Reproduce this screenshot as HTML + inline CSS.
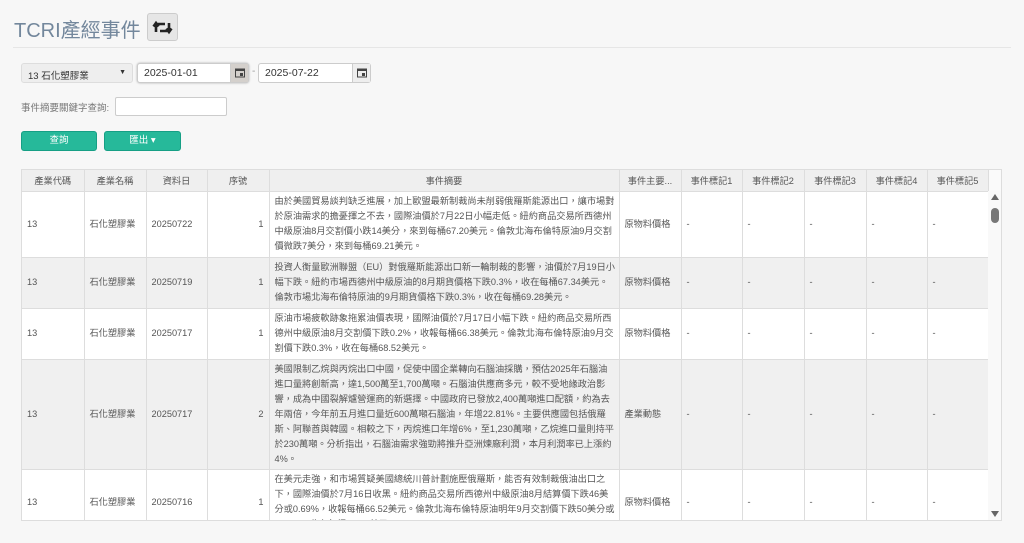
<!DOCTYPE html>
<html><head><meta charset="utf-8"><style>
*{box-sizing:border-box;margin:0;padding:0}
body{width:1024px;height:543px;background:#f7f7f7;font-family:"Liberation Sans","Noto Sans CJK TC",sans-serif;color:#555;position:relative;overflow:hidden}
.abs{position:absolute}
.title{left:14px;top:14px;font-size:20px;color:#73879c}
.ib{left:147px;top:13px;width:31px;height:28px;border:1px solid #ccc;border-radius:3px;background:#e6e6e6}
.hr{left:13px;top:47px;width:998px;height:1px;background:#e6e6e6}
.sel{left:21px;top:63px;width:112px;height:20px;border:1px solid #ddd;border-radius:3px;background:#eee;font-size:9.5px;padding:4px 6px;color:#333}
.date{height:20px;border:1px solid #ccc;border-radius:3px;background:#fff;font-size:10.5px;padding:3px 6px;color:#333}
.cal{position:absolute;right:0;top:0;width:18px;height:18px;border-left:1px solid #ccc;background:#eee}
.lbl{left:21px;top:100px;font-size:9.5px;color:#777}
.kw{left:115px;top:97px;width:112px;height:19px;border:1px solid #ccc;border-radius:2px;background:#fff}
.btn{top:131px;height:20px;background:#26b99a;border:1px solid #169f85;border-radius:3px;color:#fff;font-size:9.5px;text-align:center;line-height:18px}
.grid{left:21px;top:169px;width:981px;height:352px;border:1px solid #ddd;background:#fafafa;overflow:hidden}
table{border-collapse:collapse;table-layout:fixed;width:966px;font-size:9.2px}
th{background:#efefef;height:21px;font-weight:normal;color:#555;border-right:1px solid #ddd;border-bottom:1px solid #ddd;white-space:nowrap;overflow:hidden}
td{border-right:1px solid #ddd;border-bottom:1px solid #ddd;padding:2px 5px;line-height:15px;white-space:nowrap;color:#555;vertical-align:middle}
tr.g td{background:#f0f0f0}
tr.w td{background:#fff}
.r{text-align:right}
.sb{position:absolute;left:966px;top:21px;width:14px;height:331px;background:#f9f9f9}
</style></head><body>
<div class="abs title">TCRI產經事件</div>
<div class="abs ib"><svg width="29" height="26" viewBox="0 0 29 26"><path d="M8 18V10h9M5.5 12.5l2.5-3.5 2.5 3.5" stroke="#222" stroke-width="2.6" fill="none"/><path d="M21 9v8h-9M18.5 14.5l2.5 3.5 2.5-3.5" stroke="#222" stroke-width="2.6" fill="none"/></svg></div>
<div class="abs hr"></div>
<div class="abs sel">13 石化塑膠業<span style="position:absolute;right:6px;top:5px;font-size:7px">▼</span></div>
<div class="abs date" style="left:137px;top:63px;width:112px;box-shadow:0 0 2px #aaa">2025-01-01<div class="cal" style="background:#d4d0cc"><svg width="18" height="18"><rect x="4.5" y="5" width="9" height="8" fill="none" stroke="#444"/><rect x="4.5" y="5" width="9" height="2" fill="#444"/><rect x="9" y="9" width="3" height="3" fill="#444"/></svg></div></div>
<div class="abs" style="left:252px;top:66px;font-size:10px;color:#999">-</div>
<div class="abs date" style="left:258px;top:63px;width:113px">2025-07-22<div class="cal"><svg width="18" height="18"><rect x="4.5" y="5" width="9" height="8" fill="none" stroke="#444"/><rect x="4.5" y="5" width="9" height="2" fill="#444"/><rect x="9" y="9" width="3" height="3" fill="#444"/></svg></div></div>
<div class="abs lbl">事件摘要關鍵字查詢:</div>
<div class="abs kw"></div>
<div class="abs btn" style="left:21px;width:76px">查詢</div>
<div class="abs btn" style="left:104px;width:77px">匯出 ▾</div>
<div class="abs grid">
<table>
<colgroup><col style="width:62px"><col style="width:62px"><col style="width:61px"><col style="width:62px"><col style="width:350px"><col style="width:62px"><col style="width:61px"><col style="width:62px"><col style="width:62px"><col style="width:61px"><col style="width:61px"></colgroup>
<tr><th>產業代碼</th><th>產業名稱</th><th>資料日</th><th>序號</th><th>事件摘要</th><th>事件主要...</th><th>事件標記1</th><th>事件標記2</th><th>事件標記3</th><th>事件標記4</th><th>事件標記5</th></tr>
<tr class="w" style="height:66px"><td>13</td><td>石化塑膠業</td><td>20250722</td><td class="r">1</td><td>由於美國貿易談判缺乏進展，加上歐盟最新制裁尚未削弱俄羅斯能源出口，讓市場對<br>於原油需求的擔憂揮之不去，國際油價於7月22日小幅走低。紐約商品交易所西德州<br>中級原油8月交割價小跌14美分，來到每桶67.20美元。倫敦北海布倫特原油9月交割<br>價微跌7美分，來到每桶69.21美元。</td><td>原物料價格</td><td>-</td><td>-</td><td>-</td><td>-</td><td>-</td></tr>
<tr class="g" style="height:51px"><td>13</td><td>石化塑膠業</td><td>20250719</td><td class="r">1</td><td>投資人衡量歐洲聯盟（EU）對俄羅斯能源出口新一輪制裁的影響，油價於7月19日小<br>幅下跌。紐約市場西德州中級原油的8月期貨價格下跌0.3%，收在每桶67.34美元。<br>倫敦市場北海布倫特原油的9月期貨價格下跌0.3%，收在每桶69.28美元。</td><td>原物料價格</td><td>-</td><td>-</td><td>-</td><td>-</td><td>-</td></tr>
<tr class="w" style="height:51px"><td>13</td><td>石化塑膠業</td><td>20250717</td><td class="r">1</td><td>原油市場疲軟跡象拖累油價表現，國際油價於7月17日小幅下跌。紐約商品交易所西<br>德州中級原油8月交割價下跌0.2%，收報每桶66.38美元。倫敦北海布倫特原油9月交<br>割價下跌0.3%，收在每桶68.52美元。</td><td>原物料價格</td><td>-</td><td>-</td><td>-</td><td>-</td><td>-</td></tr>
<tr class="g" style="height:110px"><td>13</td><td>石化塑膠業</td><td>20250717</td><td class="r">2</td><td>美國限制乙烷與丙烷出口中國，促使中國企業轉向石腦油採購，預估2025年石腦油<br>進口量將創新高，達1,500萬至1,700萬噸。石腦油供應商多元，較不受地緣政治影<br>響，成為中國裂解爐營運商的新選擇。中國政府已發放2,400萬噸進口配額，約為去<br>年兩倍，今年前五月進口量近600萬噸石腦油，年增22.81%。主要供應國包括俄羅<br>斯、阿聯酋與韓國。相較之下，丙烷進口年增6%，至1,230萬噸，乙烷進口量則持平<br>於230萬噸。分析指出，石腦油需求強勁將推升亞洲煉廠利潤，本月利潤率已上漲約<br>4%。</td><td>產業動態</td><td>-</td><td>-</td><td>-</td><td>-</td><td>-</td></tr>
<tr class="w" style="height:66px"><td>13</td><td>石化塑膠業</td><td>20250716</td><td class="r">1</td><td>在美元走強，和市場質疑美國總統川普計劃施壓俄羅斯，能否有效制裁俄油出口之<br>下，國際油價於7月16日收黑。紐約商品交易所西德州中級原油8月結算價下跌46美<br>分或0.69%，收報每桶66.52美元。倫敦北海布倫特原油明年9月交割價下跌50美分或<br>0.73%，收在每桶68.71美元。</td><td>原物料價格</td><td>-</td><td>-</td><td>-</td><td>-</td><td>-</td></tr>
</table>
<div class="sb"><div style="position:absolute;left:3px;top:3px;width:0;height:0;border-left:4px solid transparent;border-right:4px solid transparent;border-bottom:6px solid #666"></div><div style="position:absolute;left:3px;top:17px;width:8px;height:15px;border-radius:4px;background:#777"></div><div style="position:absolute;left:3px;top:320px;width:0;height:0;border-left:4px solid transparent;border-right:4px solid transparent;border-top:6px solid #666"></div></div>
</div>
</body></html>
